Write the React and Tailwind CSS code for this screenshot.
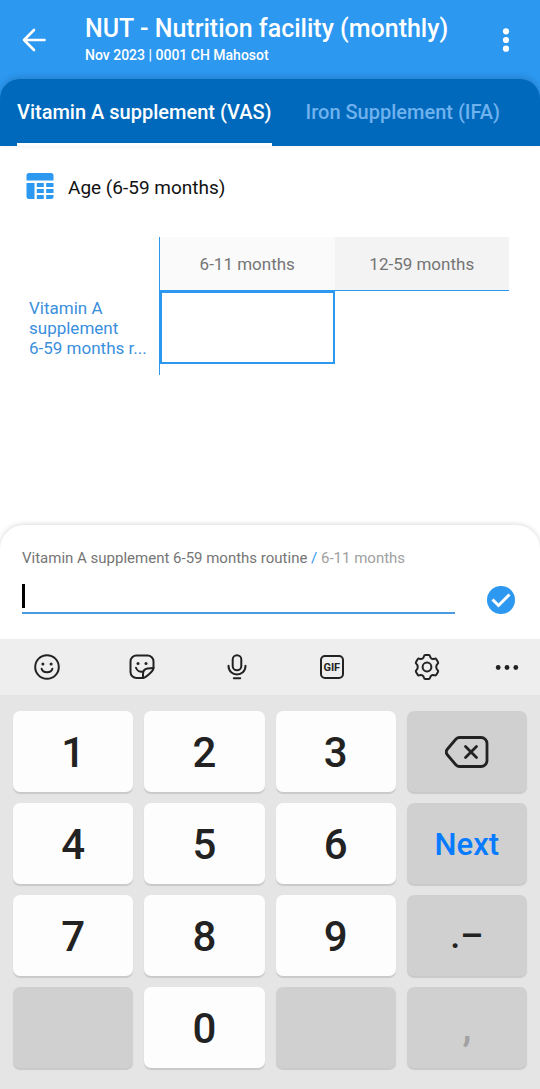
import React from 'react';

const stroke = {
  fill: 'none',
  stroke: 'currentColor',
  strokeLinecap: 'round',
  strokeLinejoin: 'round',
};

function BackIcon() {
  return (
    <svg className="size-7" viewBox="0 0 28 28" {...stroke} strokeWidth="2.6" aria-hidden="true">
      <path d="M24.5 14H4M14 4 4 14l10 10" />
    </svg>
  );
}

function MoreIcon() {
  return (
    <svg className="size-7" viewBox="0 0 28 28" fill="currentColor" aria-hidden="true">
      <circle cx="14" cy="5.3" r="3.1" />
      <circle cx="14" cy="14" r="3.1" />
      <circle cx="14" cy="22.7" r="3.1" />
    </svg>
  );
}

function TableIcon() {
  return (
    <svg className="size-7 text-[#2c98f0]" viewBox="0 0 28 28" fill="currentColor" aria-hidden="true">
      <path d="M3 1h22a2.500 2.500 0 0 1 2.500 2.500V8.500H.5V3.500A2.500 2.500 0 0 1 3 1Z" />
      <path d="M.5 11H8.500V27H3A2.500 2.500 0 0 1 .5 24.500Z" />
      <path d="M10.800 11h7v4H10.800zM20.200 11h7.300v4H20.200zM10.800 17h7v4H10.800zM20.200 17h7.300v4H20.200zM10.800 23h7v4H10.800zM20.200 23h7.300v1.500A2.500 2.500 0 0 1 25 27h-4.800z" />
    </svg>
  );
}

function CheckIcon() {
  return (
    <svg className="size-7" viewBox="0 0 28 28" aria-hidden="true">
      <circle cx="14" cy="14" r="14" fill="#2c98f0" />
      <path d="m5.500 13.500 6 6L22.500 8.500" fill="none" stroke="#fff" strokeWidth="3" />
    </svg>
  );
}

function SmileyIcon() {
  return (
    <svg className="size-7" viewBox="0 0 28 28" {...stroke} strokeWidth="2" aria-hidden="true">
      <circle cx="14" cy="14" r="11.800" />
      <path d="M8.600 15.800c1.200 4.600 9.600 4.600 10.800 0" />
      <circle cx="9.900" cy="11" r="1.500" fill="currentColor" stroke="none" />
      <circle cx="18.100" cy="11" r="1.500" fill="currentColor" stroke="none" />
    </svg>
  );
}

function StickerIcon() {
  return (
    <svg className="size-7" viewBox="0 0 28 28" {...stroke} strokeWidth="2" aria-hidden="true">
      <path d="M25.500 15V8.500a6 6 0 0 0-6-6h-11a6 6 0 0 0-6 6v10.500a6 6 0 0 0 6 6H15c2 0 10.500-6.500 10.500-10Z" />
      <path d="M15 25v-4c0-3 1.500-5 4.500-5.500l6-.5" />
      <path d="M8 14.800c1 3 4 4.400 7 3.700" />
      <circle cx="10" cy="10.500" r="1.500" fill="currentColor" stroke="none" />
      <circle cx="18" cy="10.500" r="1.500" fill="currentColor" stroke="none" />
    </svg>
  );
}

function MicIcon() {
  return (
    <svg className="size-7" viewBox="0 0 28 28" {...stroke} strokeWidth="2" aria-hidden="true">
      <rect x="9.700" y="2.300" width="8.600" height="15" rx="4.300" />
      <path d="M5.500 12.800c0 11.600 17 11.600 17 0M10.800 25.200h6.400" />
    </svg>
  );
}

function GifIcon() {
  return (
    <span className="flex size-6 items-center justify-center rounded-[5px] border-2 border-current text-[11px] leading-none font-bold">
      GIF
    </span>
  );
}

function GearIcon() {
  return (
    <svg className="size-7" viewBox="0 0 28 28" {...stroke} strokeWidth="2" aria-hidden="true">
      <circle cx="14" cy="14" r="4.400" />
      <path d="M12.300 1.900h3.400c.9 0 1.200.6 1.400 1.500.4 2.200 2.100 3.200 4.200 2.400.9-.4 1.600-.3 2 .4l1.700 2.900c.5.800.2 1.400-.5 2-1.700 1.400-1.700 4.400 0 5.800.7.600 1 1.200.5 2l-1.700 2.900c-.4.700-1.100.8-2 .4-2.100-.8-3.800.2-4.200 2.400-.2.900-.5 1.500-1.400 1.500h-3.400c-.9 0-1.200-.6-1.400-1.500-.4-2.200-2.100-3.200-4.200-2.400-.9.400-1.600.3-2-.4L3 18.900c-.5-.8-.2-1.400.5-2 1.700-1.400 1.700-4.400 0-5.800-.7-.6-1-1.200-.5-2l1.700-2.900c.4-.7 1.100-.8 2-.4 2.100.8 3.800-.2 4.200-2.400.2-.9.500-1.500 1.400-1.500Z" />
    </svg>
  );
}

function DotsIcon() {
  return (
    <svg className="size-7" viewBox="0 0 28 28" fill="currentColor" aria-hidden="true">
      <circle cx="5.200" cy="14.500" r="2.400" />
      <circle cx="14" cy="14.500" r="2.400" />
      <circle cx="22.800" cy="14.500" r="2.400" />
    </svg>
  );
}

function BackspaceIcon() {
  return (
    <svg className="h-8 w-11" viewBox="0 0 44 32" {...stroke} strokeWidth="2.800" aria-hidden="true">
      <path d="M14.500 1.500h21.500a6 6 0 0 1 6 6v17a6 6 0 0 1-6 6H14.500c-1.500 0-2.500-.5-3.500-1.500L2.500 19c-1.700-2-1.700-4 0-6L11 3c1-1 2-1.500 3.500-1.500Z" />
      <path d="m20.500 10.500 11 11m0-11-11 11" />
    </svg>
  );
}

const tools = [
  { name: 'Emoji', icon: SmileyIcon },
  { name: 'Stickers', icon: StickerIcon },
  { name: 'Voice input', icon: MicIcon },
  { name: 'GIF', icon: GifIcon },
  { name: 'Settings', icon: GearIcon },
];

const keys = [
  { label: '1' },
  { label: '2' },
  { label: '3' },
  { label: 'Backspace', kind: 'backspace' },
  { label: '4' },
  { label: '5' },
  { label: '6' },
  { label: 'Next', kind: 'next' },
  { label: '7' },
  { label: '8' },
  { label: '9' },
  { label: '.–', kind: 'symbols' },
  { label: 'Blank left', kind: 'blank' },
  { label: '0' },
  { label: 'Blank right', kind: 'blank' },
  { label: ',', kind: 'comma' },
];

const keyStyles = {
  digit: 'bg-[#fdfdfd] pt-[3px] text-[42px] text-[#222]',
  backspace: 'bg-[#d0d0d0] text-[#222]',
  next: 'bg-[#d0d0d0] pt-[2px] text-[31px] text-[#077bff]',
  symbols: 'bg-[#d0d0d0] text-[36px] text-[#222]',
  blank: 'bg-[#d0d0d0]',
  comma: 'bg-[#d0d0d0] text-[40px] text-[#a2a2a2]',
};

function Key({ label, kind = 'digit' }) {
  const drawn = kind === 'backspace' ? <BackspaceIcon /> : kind === 'blank' ? null : label;
  return (
    <button
      type="button"
      aria-label={label}
      disabled={kind === 'blank'}
      className={`flex h-[81px] items-center justify-center rounded-[7px] leading-none font-medium shadow-[0_2px_1px_#c9c9c9] ${keyStyles[kind]}`}
    >
      {drawn}
    </button>
  );
}

export default function App() {
  return (
    <div className="flex min-h-screen flex-col bg-white font-['Roboto',sans-serif]">
      <header className="bg-[#2c98f0] text-white">
        <div className="flex h-[79px] items-center pr-5 pl-5">
          <button type="button" aria-label="Back">
            <BackIcon />
          </button>
          <div className="ml-[37px] min-w-0 flex-1 pb-[2px]">
            <h1 className="truncate text-[25px] leading-8 font-medium">NUT - Nutrition facility (monthly)</h1>
            <p className="truncate text-[14px] leading-5 font-medium">Nov 2023 | 0001 CH Mahosot</p>
          </div>
          <button type="button" aria-label="More options">
            <MoreIcon />
          </button>
        </div>
        <nav
          role="tablist"
          className="flex h-[67px] rounded-t-[20px] bg-[#0069bc] pl-[17px] text-[20px] font-medium whitespace-nowrap shadow-[0_-2px_6px_rgba(0,0,0,0.15)]"
        >
          <button type="button" role="tab" aria-selected="true" className="border-b-[3px] border-white pt-[2px]">
            Vitamin A supplement (VAS)
          </button>
          <button type="button" role="tab" aria-selected="false" className="ml-[34px] border-b-[3px] border-transparent pt-[2px] text-[#6fb2ee]">
            Iron Supplement (IFA)
          </button>
        </nav>
      </header>

      <main className="flex-1">
        <div className="flex items-start gap-[14px] px-[26px] pt-[26px]">
          <TableIcon />
          <h2 className="text-[19px] leading-8 text-[#111]">Age (6-59 months)</h2>
        </div>
        <div className="pt-[33px] pr-[31px] pl-[29px]">
          <table className="w-full table-fixed border-separate border-spacing-0 text-[17px]">
            <colgroup>
              <col className="w-[131px]" />
              <col />
              <col />
            </colgroup>
            <thead>
              <tr className="h-[54px] text-[#757575]">
                <td className="border-r border-[#2c98f0]" />
                <th scope="col" className="border-b border-[#2c98f0] bg-[#fafafa] pt-[3px] font-normal">6-11 months</th>
                <th scope="col" className="border-b border-[#2c98f0] bg-[#f3f3f3] pt-[3px] font-normal">12-59 months</th>
              </tr>
            </thead>
            <tbody>
              <tr className="h-[84px] align-top">
                <th scope="row" className="border-r border-[#2c98f0] pt-[7px] text-left text-[17px] leading-5 font-normal whitespace-nowrap text-[#3a8fdc]">
                  Vitamin A<br />supplement<br />6-59 months r...
                </th>
                <td>
                  <input
                    aria-label="6-11 months value"
                    className="block h-[73px] w-full border-2 border-[#2c98f0] px-3 text-center outline-none"
                  />
                </td>
                <td>
                  <input aria-label="12-59 months value" className="block h-[73px] w-full px-3 text-center outline-none" />
                </td>
              </tr>
            </tbody>
          </table>
        </div>
      </main>

      <form className="rounded-t-[24px] bg-white px-[22px] pt-[23px] pb-[25px] shadow-[0_-1px_5px_rgba(0,0,0,0.14)]">
        <label htmlFor="entry" className="block text-[15px] leading-5 text-[#757575]">
          Vitamin A supplement 6-59 months routine <span className="text-[#2c98f0]">/</span>{' '}
          <span className="text-[#a0a0a0]">6-11 months</span>
        </label>
        <div className="mt-3 flex items-end">
          <div className="flex h-[34px] flex-1 items-center border-b-2 border-[#4b9be0]">
            <span className="h-6 w-[3px] bg-black" />
            <input id="entry" inputMode="numeric" className="h-full min-w-0 flex-1 text-[20px] caret-transparent outline-none" />
          </div>
          <button type="button" aria-label="Confirm" className="mr-[3px] ml-8">
            <CheckIcon />
          </button>
        </div>
      </form>

      <section aria-label="Keyboard" className="bg-[#e5e5e5] text-[#222]">
        <div className="flex h-14 items-center bg-[#eeeeee]">
          {tools.map(({ name, icon: Icon }) => (
            <button key={name} type="button" aria-label={name} className="flex flex-1 items-center justify-center">
              <Icon />
            </button>
          ))}
          <button type="button" aria-label="More tools" className="flex w-[66px] items-center justify-center">
            <DotsIcon />
          </button>
        </div>
        <div className="grid grid-cols-4 gap-[11px] px-[13px] pt-4 pb-[21px]">
          {keys.map((key) => (
            <Key key={key.label} {...key} />
          ))}
        </div>
      </section>
    </div>
  );
}
